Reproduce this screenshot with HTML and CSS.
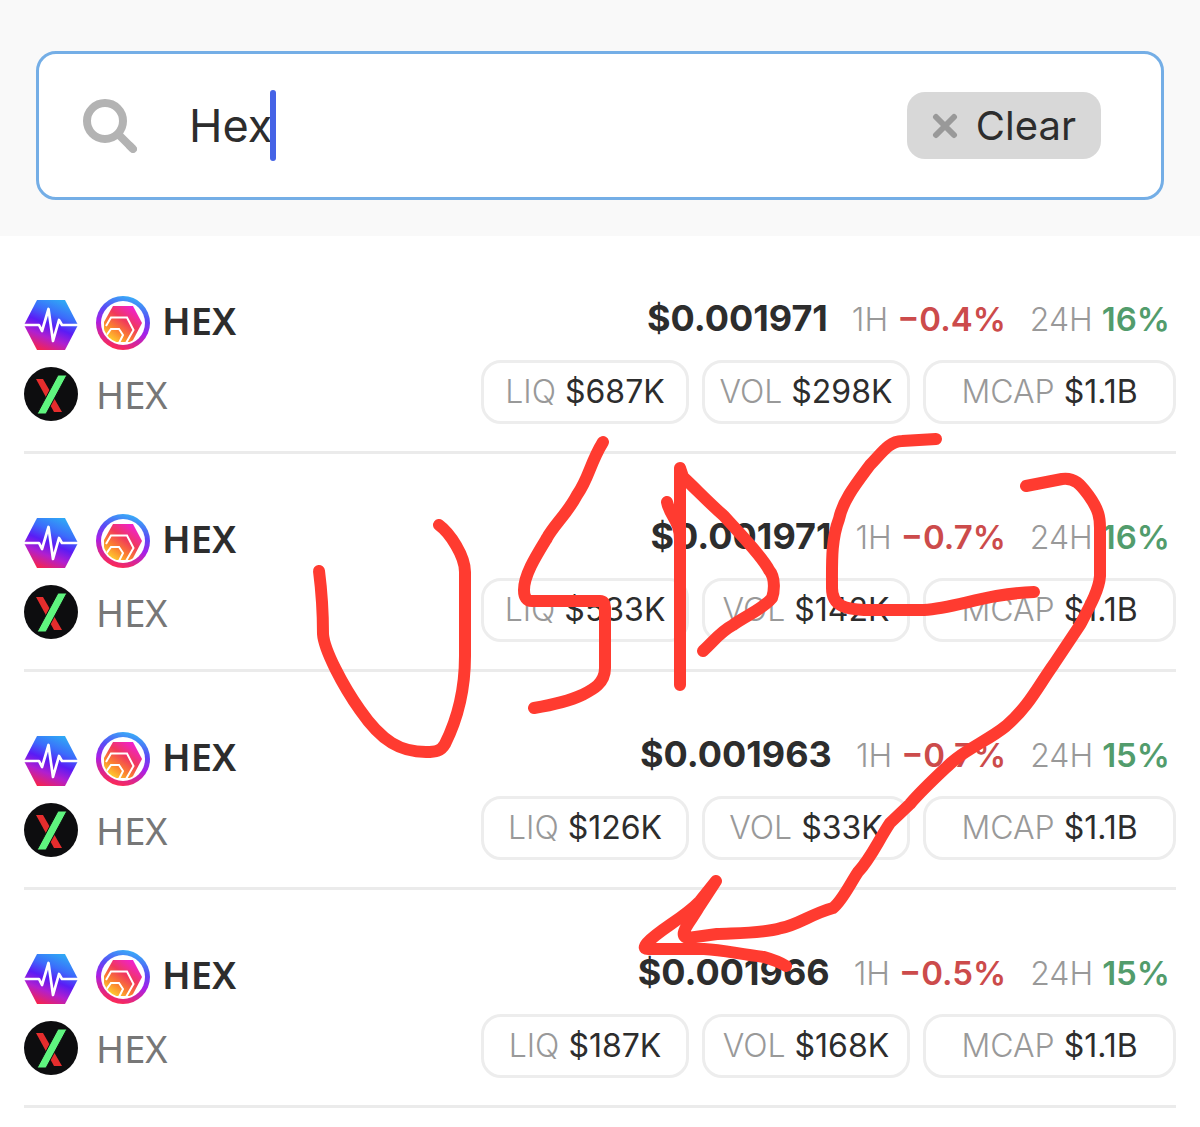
FILE: index.html
```html
<!DOCTYPE html>
<html lang="en">
<head>
    <meta charset="utf-8">
    <meta name="viewport" content="width=device-width, initial-scale=1">
    <title>Hex</title>
    <link rel="stylesheet" href="styles.css">
</head>
<body>
    <!-- shared icons -->
    <svg class="defs" width="0" height="0" aria-hidden="true">
        <defs>
            <linearGradient id="pulseFill" x1="0.7" y1="0" x2="0.25" y2="1">
                <stop offset="0" stop-color="#2fa8f5"/>
                <stop offset="0.28" stop-color="#3c6bfb"/>
                <stop offset="0.5" stop-color="#5a1cf5"/>
                <stop offset="0.72" stop-color="#b01fd0"/>
                <stop offset="1" stop-color="#fa2347"/>
            </linearGradient>
            <linearGradient id="ringFill" x1="0.7" y1="0" x2="0.4" y2="1">
                <stop offset="0" stop-color="#35b5f8"/>
                <stop offset="0.35" stop-color="#5a4af5"/>
                <stop offset="0.6" stop-color="#a81fe8"/>
                <stop offset="1" stop-color="#ff2a50"/>
            </linearGradient>
            <linearGradient id="hexFill" x1="0.9" y1="0.1" x2="0.2" y2="1">
                <stop offset="0" stop-color="#f01fd8"/>
                <stop offset="0.4" stop-color="#f0385c"/>
                <stop offset="0.7" stop-color="#fb8030"/>
                <stop offset="1" stop-color="#ffd52e"/>
            </linearGradient>
            <clipPath id="hexClip"><circle cx="27" cy="27" r="20"/></clipPath>
        </defs>
        <symbol id="pulse" viewBox="0 0 54 54">
            <path d="M13 4H41L54 29L41 54H13L0 29Z" fill="url(#pulseFill)"/>
            <path d="M0 29H15L18 35L24.500 13L29 45L35 24L38 29H54" fill="none" stroke="#fff" stroke-width="2.700" stroke-linejoin="round"/>
        </symbol>
        <symbol id="hex" viewBox="0 0 54 54">
            <circle cx="27" cy="27" r="27" fill="url(#ringFill)"/>
            <circle cx="27" cy="27" r="22" fill="#fff"/>
            <g clip-path="url(#hexClip)">
                <path d="M17 10H37L46 27L36 46H8V26Z" fill="url(#hexFill)"/>
                <path d="M10 30L15 21.500H31L37.500 34L30 47" fill="none" stroke="#fff" stroke-width="2"/>
                <path d="M10 40L15 33H23L27 39L23 47" fill="none" stroke="#fff" stroke-width="2"/>
            </g>
        </symbol>
        <symbol id="dex" viewBox="0 0 54 54">
            <circle cx="27" cy="27" r="27" fill="#0d0d0f"/>
            <path d="M12 12H19L38 45H30Z" fill="#e52d2d"/>
            <path d="M34 8H43L22 47H13Z" fill="#5ff57f" stroke="#0d0d0f" stroke-width="1"/>
        </symbol>
    </svg>

    <header class="search">
        <div class="search-box">
            <svg class="search-icon" viewBox="0 0 54 54" aria-hidden="true">
                <circle cx="22" cy="22" r="18" fill="none" stroke="#b3b3b3" stroke-width="8"/>
                <path d="M36 36L50 50" stroke="#b3b3b3" stroke-width="8"/>
                <path d="M47 47L50 50" stroke="#b3b3b3" stroke-width="8" stroke-linecap="round"/>
            </svg>
            <label class="field">
                <input class="query" type="text" value="Hex" aria-label="Search">
                <span class="caret"></span>
            </label>
            <button class="clear" type="button">
                <svg class="clear-icon" viewBox="0 0 26 26" aria-hidden="true">
                    <path d="M4 4L22 22M22 4L4 22" stroke="#999" stroke-width="6" stroke-linecap="round"/>
                </svg>
                Clear
            </button>
        </div>
    </header>

    <ul class="pairs">
        <li class="pair">
            <div class="token">
                <div class="line">
                    <svg class="icon"><use href="#pulse"/></svg>
                    <svg class="icon"><use href="#hex"/></svg>
                    <span class="symbol">HEX</span>
                </div>
                <div class="line">
                    <svg class="icon"><use href="#dex"/></svg>
                    <span class="name">HEX</span>
                </div>
            </div>
            <div class="stats">
                <div class="prices">
                    <strong class="price">$0.001971</strong>
                    <span class="change">1H <b class="down">−0.4%</b></span>
                    <span class="change">24H <b class="up">16%</b></span>
                </div>
                <div class="pills">
                    <span class="pill">LIQ <b>$687K</b></span>
                    <span class="pill">VOL <b>$298K</b></span>
                    <span class="pill">MCAP <b>$1.1B</b></span>
                </div>
            </div>
        </li>
        <li class="pair">
            <div class="token">
                <div class="line">
                    <svg class="icon"><use href="#pulse"/></svg>
                    <svg class="icon"><use href="#hex"/></svg>
                    <span class="symbol">HEX</span>
                </div>
                <div class="line">
                    <svg class="icon"><use href="#dex"/></svg>
                    <span class="name">HEX</span>
                </div>
            </div>
            <div class="stats">
                <div class="prices">
                    <strong class="price">$0.001971</strong>
                    <span class="change">1H <b class="down">−0.7%</b></span>
                    <span class="change">24H <b class="up">16%</b></span>
                </div>
                <div class="pills">
                    <span class="pill">LIQ <b>$533K</b></span>
                    <span class="pill">VOL <b>$142K</b></span>
                    <span class="pill">MCAP <b>$1.1B</b></span>
                </div>
            </div>
        </li>
        <li class="pair">
            <div class="token">
                <div class="line">
                    <svg class="icon"><use href="#pulse"/></svg>
                    <svg class="icon"><use href="#hex"/></svg>
                    <span class="symbol">HEX</span>
                </div>
                <div class="line">
                    <svg class="icon"><use href="#dex"/></svg>
                    <span class="name">HEX</span>
                </div>
            </div>
            <div class="stats">
                <div class="prices">
                    <strong class="price">$0.001963</strong>
                    <span class="change">1H <b class="down">−0.7%</b></span>
                    <span class="change">24H <b class="up">15%</b></span>
                </div>
                <div class="pills">
                    <span class="pill">LIQ <b>$126K</b></span>
                    <span class="pill">VOL <b>$33K</b></span>
                    <span class="pill">MCAP <b>$1.1B</b></span>
                </div>
            </div>
        </li>
        <li class="pair">
            <div class="token">
                <div class="line">
                    <svg class="icon"><use href="#pulse"/></svg>
                    <svg class="icon"><use href="#hex"/></svg>
                    <span class="symbol">HEX</span>
                </div>
                <div class="line">
                    <svg class="icon"><use href="#dex"/></svg>
                    <span class="name">HEX</span>
                </div>
            </div>
            <div class="stats">
                <div class="prices">
                    <strong class="price">$0.001966</strong>
                    <span class="change">1H <b class="down">−0.5%</b></span>
                    <span class="change">24H <b class="up">15%</b></span>
                </div>
                <div class="pills">
                    <span class="pill">LIQ <b>$187K</b></span>
                    <span class="pill">VOL <b>$168K</b></span>
                    <span class="pill">MCAP <b>$1.1B</b></span>
                </div>
            </div>
        </li>
    </ul>

    <!-- freehand marker over the list -->
    <svg class="marker" viewBox="300 420 820 570" role="img" aria-label="Hand-drawn USDC with an arrow">
        <path d="M319 571Q323 602 323 634C324 650 343 686 360 710C382 742 401 752 426 752C436 752 441 751 445 744C458 718 465 690 465 656V572C465 556 450 533 439 525"/>
        <path d="M603 442C590 463 589 478 577 495C567 514 554 525 547 538C536 556 524 575 524 590Q524 601 532 601H600Q605 601 605 607V668C605 684 592 690 582 695C567 702 552 705 534 708"/>
        <path d="M667 502C670 517 680 520 680 540"/>
        <path d="M680 685V468L683 477C696 489 708 502 724 516C741 535 762 556 769 570C776 578 774 593 772 598C763 609 747 615 733 625C720 632 715 640 703 651"/>
        <path d="M936 439L902 441C889 441 881 454 870 465C856 484 843 500 839 519C831 540 832 563 832 588C832 607 847 609 864 610H924C957 608 984 594 1034 592"/>
        <path d="M1026 486L1062 479C1076 477 1082 487 1089 496C1099 510 1100 518 1100 528V576C1099 590 1090 606 1080 625L1054 664C1037 688 1029 706 1006 726C989 740 966 749 951 763C933 780 922 790 910 804L890 823C878 841 871 858 858 872C850 884 842 901 833 908C811 914 798 925 781 928C761 934 734 933 717 934L688 938C676 936 692 920 699 907L716 881L700 901C684 918 660 929 647 943Q642 949 648 949H704C724 950 738 954 764 957Q778 961 786 966"/>
    </svg>
</body>
</html>
```
FILE: styles.css
```css
*{
    box-sizing: border-box;
}
body{
    margin: 0;
    position: relative;
    background-color: #fff;
    color: #2d2d2d;
    font-family: Inter, "Liberation Sans", sans-serif;
    font-size: 32px;
}
.defs{
    display: block;
}

/* search bar */
.search{
    padding: 51px 36px 36px;
    background-color: #f9f9f9;
}
.search-box{
    display: flex;
    align-items: center;
    min-height: 149px;
    padding: 0 60px 0 44px;
    background-color: #fff;
    border: 3px solid #74aee6;
    border-radius: 20px;
}
.search-icon{
    width: 54px;
    height: 54px;
}
.field{
    display: flex;
    align-items: center;
    flex: 1;
    margin-left: 52px;
    cursor: text;
}
.query{
    field-sizing: content;
    padding: 0;
    border: 0;
    outline: 0;
    background: none;
    color: inherit;
    font-family: inherit;
    font-size: 45px;
    line-height: 60px;
}
.caret{
    width: 6px;
    height: 71px;
    margin-left: -2px;
    border-radius: 3px;
    background-color: #4563e6;
}
.clear{
    display: flex;
    align-items: center;
    gap: 18px;
    height: 67px;
    padding: 0 25px;
    border: 0;
    border-radius: 18px;
    background-color: #d8d8d8;
    color: inherit;
    font-family: inherit;
    font-size: 40px;
}
.clear-icon{
    width: 26px;
    height: 26px;
}

/* pair list */
.pairs{
    margin: 0;
    padding: 0 24px;
    list-style: none;
}
.pair{
    display: flex;
    justify-content: space-between;
    padding: 60px 0 27px;
    border-bottom: 3px solid #ebebeb;
}
.token{
    display: grid;
    gap: 17px;
    align-content: start;
}
.line{
    display: flex;
    align-items: center;
    gap: 18px;
    height: 54px;
}
.icon{
    width: 54px;
    height: 54px;
}
.symbol, .name{
    font-family: "Noto Sans", sans-serif;
    font-size: 38px;
    line-height: 54px;
}
.symbol{
    margin-left: -6px;
    padding-bottom: 6px;
    font-weight: 600;
}
.name{
    color: #777;
}
.stats{
    display: grid;
    gap: 18px;
    align-content: start;
}
.prices{
    display: flex;
    justify-content: flex-end;
    align-items: baseline;
    gap: 24px;
    height: 46px;
    padding-right: 6px;
    line-height: 44px;
}
.price{
    font-size: 36px;
    font-weight: 700;
}
.change{
    color: #999;
    font-weight: 300;
}
.change b{
    font-size: 33px;
    font-weight: 600;
}
.change .down{
    color: #cc4b4b;
}
.change .up{
    color: #529c6c;
}
.pills{
    display: grid;
    grid-template-columns: 208px 208px 253px;
    gap: 13px;
}
.pill{
    height: 64px;
    border: 3px solid #ededed;
    border-radius: 20px;
    color: #999;
    font-weight: 300;
    line-height: 58px;
    text-align: center;
    white-space: nowrap;
}
.pill b{
    color: #2d2d2d;
    font-weight: 400;
}

/* marker strokes */
.marker{
    position: absolute;
    top: 420px;
    right: 80px;
    width: 820px;
    height: 570px;
    pointer-events: none;
    fill: none;
    stroke: #ff3b30;
    stroke-width: 12px;
    stroke-linecap: round;
    stroke-linejoin: round;
}
```
